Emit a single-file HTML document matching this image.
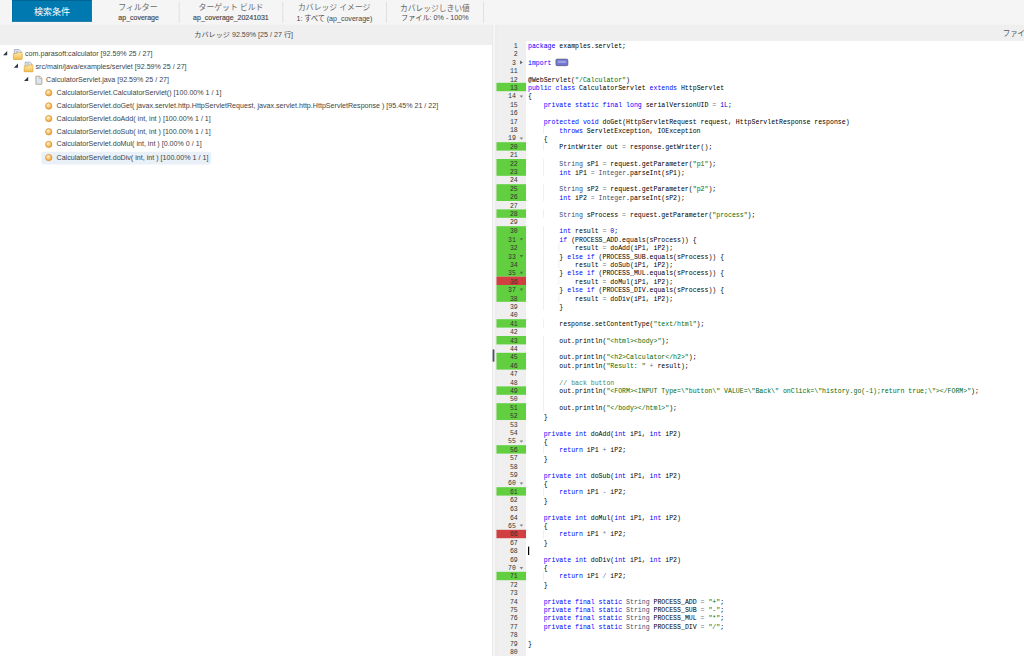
<!DOCTYPE html>
<html lang="ja"><head><meta charset="utf-8"><title>Coverage Explorer</title>
<style>
*{box-sizing:border-box;margin:0;padding:0}
html,body{width:1024px;height:656px;overflow:hidden;background:#fff}
body{font-family:"Liberation Sans",sans-serif}
#page{position:absolute;left:0;top:0;width:1707px;height:1094px;transform:scale(0.6);transform-origin:0 0;overflow:hidden;background:#fff;font-size:12px;color:#444}
.jp{position:absolute;display:block;overflow:visible;z-index:5}
.jp text{font-family:"Liberation Sans","Noto Sans CJK JP",sans-serif;font-size:1000px}
#top{position:absolute;left:0;top:0;width:1707px;height:40.7px;background:#f5f5f5;z-index:3}
#btn{position:absolute;left:19.8px;top:0;width:133.4px;height:36.3px;background:#0079b0;border:1px solid #006a9b;border-top:1.6px solid #00587f}
.sep{position:absolute;top:3.2px;height:35px;width:1.2px;background:#d2d2d2}
.sub{position:absolute;top:20.5px;height:16px;line-height:16px;text-align:center;font-size:11.7px;color:#484848;white-space:nowrap;-webkit-text-stroke:0.25px #484848}
#lhead{position:absolute;left:0;top:40px;width:820px;height:34.5px;background:#efefef}
#rhead{position:absolute;left:826px;top:40px;width:881px;height:40px;background:#efefef}
#tree{position:absolute;left:0;top:74.5px;width:820px;height:1020px;background:#fff;overflow:hidden}
#split{position:absolute;left:820px;top:40px;width:7.3px;height:1054px;background:#f6f6f6;border-left:1.2px solid #e2e2e2;border-right:1.2px solid #e2e2e2;z-index:2}
#split i{position:absolute;left:0px;top:541.5px;width:3.4px;height:21px;background:#4a5264;border-radius:1.5px}
.tr{position:absolute;left:0;height:21.5px;width:820px}
.ar{position:absolute;top:5.6px;width:0;height:0;border-style:solid;border-width:0 0 7.4px 7.4px;border-color:transparent transparent #30364a transparent}
.ti{position:absolute;top:1.4px;width:17px;height:19px;z-index:2}
.ic{display:block}
.tl{position:absolute;top:1.5px;height:20.8px;line-height:18.6px;padding:0 4.8px 0 25px;white-space:nowrap;font-size:11.87px;color:#444;border-radius:3px}
.tl.sel{background:#e9f0f8}
#ed{position:absolute;left:826px;top:68.2px;width:881px;height:1026px;overflow:hidden;font-family:"Liberation Mono",monospace;font-size:10.9px;line-height:14.04px;color:#000}
#gut{position:absolute;left:0;top:0;width:50.7px;height:1026px;background:#efefef;color:#333}
.gc{height:14.04px;padding-top:1.6px;text-align:right;padding-right:13.7px;white-space:pre;position:relative}
.gc.hf{padding-right:16.8px}
.hb{position:absolute;left:1.2px;width:49.5px}
.hb.g{background:#62cf40}
.hb.r{background:#d04040}
.fo,.fc{position:absolute;display:block;width:0;height:0;border-style:solid}
.fo{right:4.7px;top:6.4px;border-width:4.2px 3px 0 3px;border-color:rgba(60,60,60,.6) transparent transparent transparent}
.fc{right:6px;top:4.9px;border-width:3px 0 3px 4.2px;border-color:transparent transparent transparent #555}
#code{position:absolute;left:50.7px;top:0;width:831px;height:1026px;background:#fff}
.cl{height:14.04px;padding-top:2px;white-space:pre;padding-left:3.3px}
.cl i{font-style:normal}
.k{color:#0000ff}.s{color:#036a07}.c{color:#4c886b}.n{color:#0000cd}.f{color:#3c4c72}.o{color:#687687}
.fold{display:inline-block;vertical-align:top;position:relative;margin:-0.4px 0 0 0;width:21.2px;height:12.2px;background:#7d84dc;border:1.2px solid #484852;border-radius:2.6px;box-shadow:inset 0 -4px 3px rgba(90,90,200,.35)}
.fold:after{content:'';position:absolute;left:3px;right:3px;top:3.6px;height:2.4px;background:rgba(255,255,255,.28);border-radius:1px}
#code u{position:absolute;width:1px;height:14.04px;background:#e4e4e4;text-decoration:none}
.cur{position:absolute;width:2px;height:14.04px;background:#000}
</style></head><body>
<div id="page">
<svg width="0" height="0" style="position:absolute"><defs><linearGradient id="fg" x1="0" y1="0" x2="0" y2="1"><stop offset="0" stop-color="#fdeab0"/><stop offset="1" stop-color="#f3bd4d"/></linearGradient><radialGradient id="bg" cx="0.4" cy="0.35" r="0.7"><stop offset="0" stop-color="#fff0cc"/><stop offset="0.55" stop-color="#f9c56e"/><stop offset="1" stop-color="#e89a32"/></radialGradient></defs></svg>
<div id="top"><div id="btn"></div><div class="sep" style="left:298.3px"></div><div class="sep" style="left:470.5px"></div><div class="sep" style="left:643.7px"></div><div class="sep" style="left:805.2px"></div><div class="sub" style="left:163.3px;width:135.5px">ap_coverage</div><div class="sub" style="left:298.8px;width:172.2px">ap_coverage_20241031</div></div>
<div id="lhead"></div>
<div id="rhead"></div>
<div id="tree">
<div class="tr" style="top:4.8px"><b class="ar" style="left:5.3px"></b><span class="ti" style="left:21.4px"><svg class="ic" viewBox="0 0 17 19" width="17" height="19"><path d="M3 1.6h7.8l3 3v7h-10.8z" fill="#f2f5fa" stroke="#7e8ba5" stroke-width="1.1"/><path d="M5 4.4h5M5 6.4h3.5" stroke="#8f9cb3" stroke-width="1"/><path d="M1.9 8.2h4.9l1.7-1.9h6.3c.8 0 1.4.6 1.4 1.4v9c0 .8-.6 1.4-1.4 1.4h-12.4c-.8 0-1.4-.6-1.4-1.4v-7.100000000000001c0-.8.3-1.4.9-1.4z" fill="url(#fg)" stroke="#d59c32" stroke-width="1.1"/></svg></span><span class="tl" style="left:16.7px">com.parasoft:calculator [92.59% 25 / 27]</span></div>
<div class="tr" style="top:26.3px"><b class="ar" style="left:22.8px"></b><span class="ti" style="left:38.9px"><svg class="ic" viewBox="0 0 17 19" width="17" height="19"><path d="M3 1.6h7.8l3 3v7h-10.8z" fill="#f2f5fa" stroke="#7e8ba5" stroke-width="1.1"/><path d="M5 4.4h5M5 6.4h3.5" stroke="#8f9cb3" stroke-width="1"/><path d="M1.9 8.2h4.9l1.7-1.9h6.3c.8 0 1.4.6 1.4 1.4v9c0 .8-.6 1.4-1.4 1.4h-12.4c-.8 0-1.4-.6-1.4-1.4v-7.100000000000001c0-.8.3-1.4.9-1.4z" fill="url(#fg)" stroke="#d59c32" stroke-width="1.1"/></svg></span><span class="tl" style="left:34.2px">src/main/java/examples/servlet [92.59% 25 / 27]</span></div>
<div class="tr" style="top:47.8px"><b class="ar" style="left:40.3px"></b><span class="ti" style="left:56.4px"><svg class="ic" viewBox="0 0 17 19" width="17" height="19"><path d="M3.8 3h6.6l3.4 3.4v10h-10z" fill="#dbe4f2" stroke="#a49d78" stroke-width="1.3"/><path d="M10.2 3v3.6h3.6" fill="#f3f3ea" stroke="#a49d78" stroke-width="1"/></svg></span><span class="tl" style="left:51.7px">CalculatorServlet.java [92.59% 25 / 27]</span></div>
<div class="tr" style="top:69.3px"><span class="ti" style="left:73.9px"><svg class="ic" viewBox="0 0 17 19" width="17" height="19"><circle cx="7.2" cy="9.6" r="5.3" fill="url(#bg)" stroke="#cf8934" stroke-width="1.1"/></svg></span><span class="tl" style="left:69.2px">CalculatorServlet.CalculatorServlet() [100.00% 1 / 1]</span></div>
<div class="tr" style="top:90.8px"><span class="ti" style="left:73.9px"><svg class="ic" viewBox="0 0 17 19" width="17" height="19"><circle cx="7.2" cy="9.6" r="5.3" fill="url(#bg)" stroke="#cf8934" stroke-width="1.1"/></svg></span><span class="tl" style="left:69.2px">CalculatorServlet.doGet( javax.servlet.http.HttpServletRequest, javax.servlet.http.HttpServletResponse ) [95.45% 21 / 22]</span></div>
<div class="tr" style="top:112.3px"><span class="ti" style="left:73.9px"><svg class="ic" viewBox="0 0 17 19" width="17" height="19"><circle cx="7.2" cy="9.6" r="5.3" fill="url(#bg)" stroke="#cf8934" stroke-width="1.1"/></svg></span><span class="tl" style="left:69.2px">CalculatorServlet.doAdd( int, int ) [100.00% 1 / 1]</span></div>
<div class="tr" style="top:133.8px"><span class="ti" style="left:73.9px"><svg class="ic" viewBox="0 0 17 19" width="17" height="19"><circle cx="7.2" cy="9.6" r="5.3" fill="url(#bg)" stroke="#cf8934" stroke-width="1.1"/></svg></span><span class="tl" style="left:69.2px">CalculatorServlet.doSub( int, int ) [100.00% 1 / 1]</span></div>
<div class="tr" style="top:155.3px"><span class="ti" style="left:73.9px"><svg class="ic" viewBox="0 0 17 19" width="17" height="19"><circle cx="7.2" cy="9.6" r="5.3" fill="url(#bg)" stroke="#cf8934" stroke-width="1.1"/></svg></span><span class="tl" style="left:69.2px">CalculatorServlet.doMul( int, int ) [0.00% 0 / 1]</span></div>
<div class="tr" style="top:176.8px"><span class="ti" style="left:73.9px"><svg class="ic" viewBox="0 0 17 19" width="17" height="19"><circle cx="7.2" cy="9.6" r="5.3" fill="url(#bg)" stroke="#cf8934" stroke-width="1.1"/></svg></span><span class="tl sel" style="left:69.2px">CalculatorServlet.doDiv( int, int ) [100.00% 1 / 1]</span></div>
</div>
<div id="split"><i></i></div>
<div id="ed">
<div id="gut">
<div class="hb g" style="top:70.20px;height:14.04px"></div><div class="hb g" style="top:168.48px;height:14.04px"></div><div class="hb g" style="top:196.56px;height:28.08px"></div><div class="hb g" style="top:238.68px;height:28.08px"></div><div class="hb g" style="top:280.80px;height:14.04px"></div><div class="hb g" style="top:308.88px;height:84.24px"></div><div class="hb r" style="top:393.12px;height:14.04px"></div><div class="hb g" style="top:407.16px;height:28.08px"></div><div class="hb g" style="top:463.32px;height:14.04px"></div><div class="hb g" style="top:491.40px;height:14.04px"></div><div class="hb g" style="top:519.48px;height:28.08px"></div><div class="hb g" style="top:575.64px;height:14.04px"></div><div class="hb g" style="top:603.72px;height:28.08px"></div><div class="hb g" style="top:673.92px;height:14.04px"></div><div class="hb g" style="top:744.12px;height:14.04px"></div><div class="hb r" style="top:814.32px;height:14.04px"></div><div class="hb g" style="top:884.52px;height:14.04px"></div>
<div style="position:relative">
<div class="gc ">1</div>
<div class="gc ">2</div>
<div class="gc  hf">3<b class="fc"></b></div>
<div class="gc ">11</div>
<div class="gc ">12</div>
<div class="gc g">13</div>
<div class="gc  hf">14<b class="fo"></b></div>
<div class="gc ">15</div>
<div class="gc ">16</div>
<div class="gc ">17</div>
<div class="gc ">18</div>
<div class="gc  hf">19<b class="fo"></b></div>
<div class="gc g">20</div>
<div class="gc ">21</div>
<div class="gc g">22</div>
<div class="gc g">23</div>
<div class="gc ">24</div>
<div class="gc g">25</div>
<div class="gc g">26</div>
<div class="gc ">27</div>
<div class="gc g">28</div>
<div class="gc ">29</div>
<div class="gc g">30</div>
<div class="gc g hf">31<b class="fo"></b></div>
<div class="gc g">32</div>
<div class="gc g hf">33<b class="fo"></b></div>
<div class="gc g">34</div>
<div class="gc g hf">35<b class="fo"></b></div>
<div class="gc r">36</div>
<div class="gc g hf">37<b class="fo"></b></div>
<div class="gc g">38</div>
<div class="gc ">39</div>
<div class="gc ">40</div>
<div class="gc g">41</div>
<div class="gc ">42</div>
<div class="gc g">43</div>
<div class="gc ">44</div>
<div class="gc g">45</div>
<div class="gc g">46</div>
<div class="gc ">47</div>
<div class="gc ">48</div>
<div class="gc g">49</div>
<div class="gc ">50</div>
<div class="gc g">51</div>
<div class="gc g">52</div>
<div class="gc ">53</div>
<div class="gc ">54</div>
<div class="gc  hf">55<b class="fo"></b></div>
<div class="gc g">56</div>
<div class="gc ">57</div>
<div class="gc ">58</div>
<div class="gc ">59</div>
<div class="gc  hf">60<b class="fo"></b></div>
<div class="gc g">61</div>
<div class="gc ">62</div>
<div class="gc ">63</div>
<div class="gc ">64</div>
<div class="gc  hf">65<b class="fo"></b></div>
<div class="gc r">66</div>
<div class="gc ">67</div>
<div class="gc ">68</div>
<div class="gc ">69</div>
<div class="gc  hf">70<b class="fo"></b></div>
<div class="gc g">71</div>
<div class="gc ">72</div>
<div class="gc ">73</div>
<div class="gc ">74</div>
<div class="gc ">75</div>
<div class="gc ">76</div>
<div class="gc ">77</div>
<div class="gc ">78</div>
<div class="gc ">79</div>
<div class="gc ">80</div>
</div>
</div>
<div id="code">
<div class="cl"><i class="k">package</i> examples.servlet;</div>
<div class="cl"></div>
<div class="cl"><i class="k">import</i> <span class="fold"></span></div>
<div class="cl"></div>
<div class="cl">@WebServlet(<i class="s">"/Calculator"</i>)</div>
<div class="cl"><i class="k">public</i> <i class="k">class</i> CalculatorServlet <i class="k">extends</i> HttpServlet</div>
<div class="cl">{</div>
<div class="cl">    <i class="k">private</i> <i class="k">static</i> <i class="k">final</i> <i class="k">long</i> serialVersionUID <i class="o">=</i> <i class="n">1L</i>;</div>
<div class="cl"></div>
<div class="cl">    <i class="k">protected</i> <i class="k">void</i> doGet(HttpServletRequest request, HttpServletResponse response)</div>
<div class="cl">        <i class="k">throws</i> ServletException, IOException</div>
<div class="cl">    {</div>
<div class="cl">        PrintWriter out <i class="o">=</i> response.getWriter();</div>
<div class="cl"></div>
<div class="cl">        <i class="f">String</i> sP1 <i class="o">=</i> request.getParameter(<i class="s">"p1"</i>);</div>
<div class="cl">        <i class="k">int</i> iP1 <i class="o">=</i> <i class="f">Integer</i>.parseInt(sP1);</div>
<div class="cl"></div>
<div class="cl">        <i class="f">String</i> sP2 <i class="o">=</i> request.getParameter(<i class="s">"p2"</i>);</div>
<div class="cl">        <i class="k">int</i> iP2 <i class="o">=</i> <i class="f">Integer</i>.parseInt(sP2);</div>
<div class="cl"></div>
<div class="cl">        <i class="f">String</i> sProcess <i class="o">=</i> request.getParameter(<i class="s">"process"</i>);</div>
<div class="cl"></div>
<div class="cl">        <i class="k">int</i> result <i class="o">=</i> <i class="n">0</i>;</div>
<div class="cl">        <i class="k">if</i> (PROCESS_ADD.equals(sProcess)) {</div>
<div class="cl">            result <i class="o">=</i> doAdd(iP1, iP2);</div>
<div class="cl">        } <i class="k">else</i> <i class="k">if</i> (PROCESS_SUB.equals(sProcess)) {</div>
<div class="cl">            result <i class="o">=</i> doSub(iP1, iP2);</div>
<div class="cl">        } <i class="k">else</i> <i class="k">if</i> (PROCESS_MUL.equals(sProcess)) {</div>
<div class="cl">            result <i class="o">=</i> doMul(iP1, iP2);</div>
<div class="cl">        } <i class="k">else</i> <i class="k">if</i> (PROCESS_DIV.equals(sProcess)) {</div>
<div class="cl">            result <i class="o">=</i> doDiv(iP1, iP2);</div>
<div class="cl">        }</div>
<div class="cl"></div>
<div class="cl">        response.setContentType(<i class="s">"text/html"</i>);</div>
<div class="cl"></div>
<div class="cl">        out.println(<i class="s">"&lt;html&gt;&lt;body&gt;"</i>);</div>
<div class="cl">        </div>
<div class="cl">        out.println(<i class="s">"&lt;h2&gt;Calculator&lt;/h2&gt;"</i>);</div>
<div class="cl">        out.println(<i class="s">"Result: "</i> <i class="o">+</i> result);</div>
<div class="cl">        </div>
<div class="cl">        <i class="c">// back button</i></div>
<div class="cl">        out.println(<i class="s">"&lt;FORM&gt;&lt;INPUT Type=\"button\" VALUE=\"Back\" onClick=\"history.go(-1);return true;\"&gt;&lt;/FORM&gt;"</i>);</div>
<div class="cl">        </div>
<div class="cl">        out.println(<i class="s">"&lt;/body&gt;&lt;/html&gt;"</i>);</div>
<div class="cl">    }</div>
<div class="cl"></div>
<div class="cl">    <i class="k">private</i> <i class="k">int</i> doAdd(<i class="k">int</i> iP1, <i class="k">int</i> iP2)</div>
<div class="cl">    {</div>
<div class="cl">        <i class="k">return</i> iP1 <i class="o">+</i> iP2;</div>
<div class="cl">    }</div>
<div class="cl"></div>
<div class="cl">    <i class="k">private</i> <i class="k">int</i> doSub(<i class="k">int</i> iP1, <i class="k">int</i> iP2)</div>
<div class="cl">    {</div>
<div class="cl">        <i class="k">return</i> iP1 <i class="o">-</i> iP2;</div>
<div class="cl">    }</div>
<div class="cl"></div>
<div class="cl">    <i class="k">private</i> <i class="k">int</i> doMul(<i class="k">int</i> iP1, <i class="k">int</i> iP2)</div>
<div class="cl">    {</div>
<div class="cl">        <i class="k">return</i> iP1 <i class="o">*</i> iP2;</div>
<div class="cl">    }</div>
<div class="cl"></div>
<div class="cl">    <i class="k">private</i> <i class="k">int</i> doDiv(<i class="k">int</i> iP1, <i class="k">int</i> iP2)</div>
<div class="cl">    {</div>
<div class="cl">        <i class="k">return</i> iP1 <i class="o">/</i> iP2;</div>
<div class="cl">    }</div>
<div class="cl"></div>
<div class="cl">    <i class="k">private</i> <i class="k">final</i> <i class="k">static</i> <i class="f">String</i> PROCESS_ADD <i class="o">=</i> <i class="s">"+"</i>;</div>
<div class="cl">    <i class="k">private</i> <i class="k">final</i> <i class="k">static</i> <i class="f">String</i> PROCESS_SUB <i class="o">=</i> <i class="s">"-"</i>;</div>
<div class="cl">    <i class="k">private</i> <i class="k">final</i> <i class="k">static</i> <i class="f">String</i> PROCESS_MUL <i class="o">=</i> <i class="s">"*"</i>;</div>
<div class="cl">    <i class="k">private</i> <i class="k">final</i> <i class="k">static</i> <i class="f">String</i> PROCESS_DIV <i class="o">=</i> <i class="s">"/"</i>;</div>
<div class="cl"></div>
<div class="cl">}</div>
<div class="cl"></div>
<u style="left:28.46px;top:140.40px"></u><u style="left:28.46px;top:168.48px"></u><u style="left:28.46px;top:196.56px"></u><u style="left:28.46px;top:210.60px"></u><u style="left:28.46px;top:238.68px"></u><u style="left:28.46px;top:252.72px"></u><u style="left:28.46px;top:280.80px"></u><u style="left:28.46px;top:308.88px"></u><u style="left:28.46px;top:322.92px"></u><u style="left:28.46px;top:336.96px"></u><u style="left:54.62px;top:336.96px"></u><u style="left:28.46px;top:351.00px"></u><u style="left:28.46px;top:365.04px"></u><u style="left:54.62px;top:365.04px"></u><u style="left:28.46px;top:379.08px"></u><u style="left:28.46px;top:393.12px"></u><u style="left:54.62px;top:393.12px"></u><u style="left:28.46px;top:407.16px"></u><u style="left:28.46px;top:421.20px"></u><u style="left:54.62px;top:421.20px"></u><u style="left:28.46px;top:435.24px"></u><u style="left:28.46px;top:463.32px"></u><u style="left:28.46px;top:491.40px"></u><u style="left:28.46px;top:505.44px"></u><u style="left:28.46px;top:519.48px"></u><u style="left:28.46px;top:533.52px"></u><u style="left:28.46px;top:547.56px"></u><u style="left:28.46px;top:561.60px"></u><u style="left:28.46px;top:575.64px"></u><u style="left:28.46px;top:589.68px"></u><u style="left:28.46px;top:603.72px"></u><u style="left:28.46px;top:673.92px"></u><u style="left:28.46px;top:744.12px"></u><u style="left:28.46px;top:814.32px"></u><s class="cur" style="left:3.30px;top:842.40px"></s><u style="left:28.46px;top:884.52px"></u>
</div>
</div>
<svg class="jp" role="img" aria-label="検索条件" style="left:56.67px;top:11.50px;width:59.33px;height:13.83px;" viewBox="27.0 -846.0 3932.0 935.0" preserveAspectRatio="none"><text x="0" y="0" fill="#ffffff">検索条件</text></svg>
<svg class="jp" role="img" aria-label="フィルター" style="left:199.33px;top:6.00px;width:62.83px;height:12.17px;" viewBox="139.0 -824.0 4763.0 906.0" preserveAspectRatio="none"><text x="0" y="0" fill="#6a6a6a">フィルター</text></svg>
<svg class="jp" role="img" aria-label="ターゲット ビルド" style="left:332.17px;top:5.50px;width:105.67px;height:12.17px;" viewBox="78.0 -840.0 8086.8 923.0" preserveAspectRatio="none"><text x="0" y="0" fill="#6a6a6a">ターゲット ビルド</text></svg>
<svg class="jp" role="img" aria-label="カバレッジ イメージ" style="left:497.83px;top:5.50px;width:119.17px;height:12.17px;" viewBox="98.0 -830.0 9130.8 913.0" preserveAspectRatio="none"><text x="0" y="0" fill="#6a6a6a">カバレッジ イメージ</text></svg>
<svg class="jp" role="img" aria-label="カバレッジしきい値" style="left:667.67px;top:5.50px;width:114.83px;height:12.67px;" viewBox="98.0 -844.0 8864.0 927.0" preserveAspectRatio="none"><text x="0" y="0" fill="#6a6a6a">カバレッジしきい値</text></svg>
<svg class="jp" role="img" aria-label="ファイル: 0% - 100%" style="left:669.67px;top:24.33px;width:110.83px;height:10.50px;" viewBox="139.0 -795.0 9272.6 882.0" preserveAspectRatio="none"><text x="0" y="0" fill="#484848">ファイル: 0% - 100%</text></svg>
<svg class="jp" role="img" aria-label="1: すべて (ap_coverage)" style="left:494.67px;top:24.33px;width:126.50px;height:12.83px;" viewBox="76.2 -798.0 10699.7 1005.5" preserveAspectRatio="none"><text x="0" y="0" fill="#484848">1: すべて (ap_coverage)</text></svg>
<svg class="jp" role="img" aria-label="カバレッジ 92.59% [25 / 27 行]" style="left:325.33px;top:53.33px;width:162.83px;height:11.50px;" viewBox="98.0 -845.0 13669.6 1052.5" preserveAspectRatio="none"><text x="0" y="0" fill="#4a4a4a">カバレッジ 92.59% [25 / 27 行]</text></svg>
<svg class="jp" role="img" aria-label="ファイル: " style="left:1673.17px;top:49.83px;width:50.17px;height:11.50px;" viewBox="139.0 -795.0 4047.5 882.0" preserveAspectRatio="none"><text x="0" y="0" fill="#585858">ファイル: </text></svg>
</div>
</body></html>
